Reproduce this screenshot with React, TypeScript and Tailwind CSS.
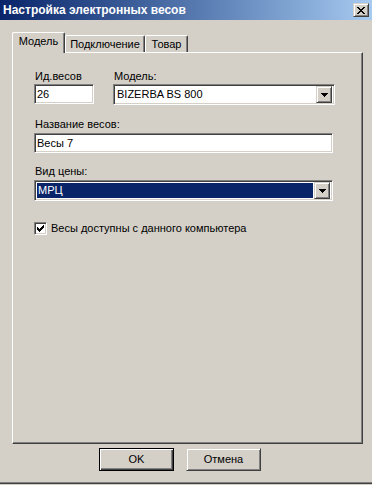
import React from "react";

// Win2000-style dialog: "Настройка электронных весов"

const sunken =
  "border border-t-[#808080] border-l-[#808080] border-b-white border-r-white shadow-[inset_1px_1px_0_#404040,inset_-1px_-1px_0_#d4d0c8]";

const raised =
  "border border-t-[#d4d0c8] border-l-[#d4d0c8] border-b-[#404040] border-r-[#404040] shadow-[inset_1px_1px_0_#fff,inset_-1px_-1px_0_#808080]";

const DropArrow: React.FC = () => (
  <div className={`w-[16px] h-[17px] bg-[#d4d0c8] flex items-center justify-center shrink-0 ${raised}`}>
    <svg width="7" height="4" viewBox="0 0 7 4" shapeRendering="crispEdges">
      <path d="M0 0h7v1H0zM1 1h5v1H1zM2 2h3v1H2zM3 3h1v1H3z" fill="#000" />
    </svg>
  </div>
);

interface ComboProps {
  value: string;
  width: string;
  selected?: boolean;
}

const Combo: React.FC<ComboProps> = ({ value, width, selected }) => (
  <div className={`${width} h-[21px] bg-white flex items-center pl-[2px] pr-[2px] ${sunken}`}>
    <div className="flex-1 h-[15px] flex items-center">
      <div
        className={`w-full h-[15px] flex items-center px-[1px] ${
          selected ? "bg-[#0a246a] text-white" : "text-black"
        }`}
      >
        {value}
      </div>
    </div>
    <div className="ml-[1px]">
      <DropArrow />
    </div>
  </div>
);

interface EditProps {
  value: string;
  width: string;
}

const Edit: React.FC<EditProps> = ({ value, width }) => (
  <div className={`${width} h-[20px] bg-white flex items-center px-[2px] text-black ${sunken}`}>
    {value}
  </div>
);

const Check: React.FC = () => (
  <div className={`w-[13px] h-[13px] bg-white flex items-center justify-center ${sunken}`}>
    <svg width="7" height="7" viewBox="0 0 7 7" shapeRendering="crispEdges">
      <path
        d="M0 2h1v3H0zM1 3h1v3H1zM2 4h1v3H2zM3 3h1v3H3zM4 2h1v3H4zM5 1h1v3H5zM6 0h1v3H6z"
        fill="#000"
      />
    </svg>
  </div>
);

const tabs = ["Модель", "Подключение", "Товар"];

export default function App() {
  return (
    <div
      className="w-[372px] h-[485px] bg-[#d4d0c8] overflow-hidden text-[11px] leading-[13px] text-black flex flex-col"
      style={{ fontFamily: '"Liberation Sans", Arial, sans-serif' }}
    >
      {/* caption */}
      <div className="h-[20px] bg-gradient-to-r from-[#0a246a] to-[#a6caf0] flex items-center pl-[3px] pr-[3px] shrink-0">
        <span className="flex-1 text-white font-bold text-[12px]">Настройка электронных весов</span>
        <div className={`w-[16px] h-[14px] bg-[#d4d0c8] flex items-center justify-center ${raised}`}>
          <svg width="8" height="7" viewBox="0 0 8 7" shapeRendering="crispEdges">
            <path
              d="M0 0h2v1H0zM6 0h2v1H6zM1 1h2v1H1zM5 1h2v1H5zM2 2h4v1H2zM3 3h2v1H3zM2 4h4v1H2zM1 5h2v1H1zM5 5h2v1H5zM0 6h2v1H0zM6 6h2v1H6z"
              fill="#000"
            />
          </svg>
        </div>
      </div>

      {/* tab strip */}
      <div className="flex items-end h-[20px] mt-[12px] ml-[12px] shrink-0">
        {tabs.map((t, i) =>
          i === 0 ? (
            <div
              key={t}
              className="relative z-10 w-[53px] h-[21px] -mb-px bg-[#d4d0c8] border-t border-l border-white border-r border-r-[#404040] rounded-tl-[2px] rounded-tr-[2px] shadow-[inset_-1px_0_0_#808080] flex justify-center pt-[2px]"
            >
              {t}
            </div>
          ) : (
            <div
              key={t}
              className={`${
                i === 1 ? "w-[80px]" : "w-[43px]"
              } h-[17px] bg-[#d4d0c8] border-t border-l border-white border-r border-r-[#404040] rounded-tl-[2px] rounded-tr-[2px] shadow-[inset_-1px_0_0_#808080] flex justify-center pt-[2px]`}
            >
              {t}
            </div>
          )
        )}
      </div>

      {/* page */}
      <div className="ml-[12px] w-[351px] h-[392px] shrink-0 border border-t-white border-l-white border-r-[#404040] border-b-[#404040] shadow-[inset_-1px_-1px_0_#808080] pl-[21px] pt-[17px]">
        <div className="flex gap-[19px]">
          <div className="flex flex-col gap-[1px]">
            <span className="pl-[1px]">Ид.весов</span>
            <Edit value="26" width="w-[60px]" />
          </div>
          <div className="flex flex-col gap-[1px]">
            <span className="pl-[1px]">Модель:</span>
            <Combo value="BIZERBA BS 800" width="w-[222px]" />
          </div>
        </div>

        <div className="flex flex-col gap-[2px] mt-[13px]">
          <span className="pl-[1px]">Название весов:</span>
          <Edit value="Весы 7" width="w-[299px]" />
        </div>

        <div className="flex flex-col gap-[2px] mt-[12px]">
          <span className="pl-[1px]">Вид цены:</span>
          <Combo value="МРЦ" width="w-[299px]" selected />
        </div>

        <label className="flex items-center gap-[4px] mt-[21px]">
          <Check />
          <span>Весы доступны с данного компьютера</span>
        </label>
      </div>

      {/* buttons */}
      <div className="flex gap-[12px] ml-[99px] mt-[4px]">
        <button className="w-[75px] h-[23px] bg-[#d4d0c8] font-normal border border-black shadow-[inset_1px_1px_0_#fff,inset_-1px_-1px_0_#404040,inset_-2px_-2px_0_#808080]">
          OK
        </button>
        <button className={`w-[75px] h-[23px] bg-[#d4d0c8] font-normal ${raised}`}>Отмена</button>
      </div>

      <div className="mt-auto mb-[1px] h-[2px] border-t border-[#808080] bg-[#404040] shrink-0" />
    </div>
  );
}
